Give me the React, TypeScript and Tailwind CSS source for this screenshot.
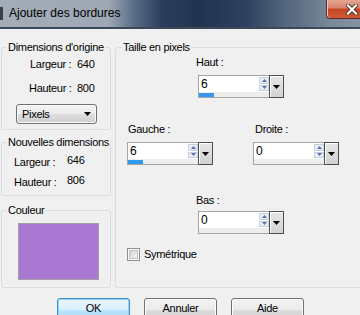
import React from "react";

const Tri = ({ up = false, color = "#000", w = 7, h = 4 }: { up?: boolean; color?: string; w?: number; h?: number }) => (
  <svg width={w} height={h} viewBox={`0 0 ${w} ${h}`}>
    {up ? (
      <polygon points={`0,${h} ${w},${h} ${w / 2},0`} fill={color} />
    ) : (
      <polygon points={`0,0 ${w},0 ${w / 2},${h}`} fill={color} />
    )}
  </svg>
);

const Spin = ({ value, bar = false }: { value: string; bar?: boolean }) => (
  <div className="flex h-[23px] w-[86px] border border-[#a5a5a5] bg-white">
    <div className="flex w-[70px] flex-col">
      <div className="flex h-[16px]">
        <div className="w-[60px] pl-[2px] text-[12px] leading-[17px]">{value}</div>
        <div className="flex w-[10px] flex-col gap-[1px] py-[1px]">
          <div className="flex h-[7px] items-center justify-center border border-[#c8d0dc] bg-[#e8edf4]">
            <Tri up color="#5b70aa" w={5} h={3} />
          </div>
          <div className="flex h-[7px] items-center justify-center border border-[#c8d0dc] bg-[#e8edf4]">
            <Tri color="#5b70aa" w={5} h={3} />
          </div>
        </div>
      </div>
      <div className="h-[5px] bg-[#ededed] pt-[1px]">
        {bar && <div className="h-[4px] w-[15px] bg-[#3399f0]" />}
      </div>
    </div>
    <div className="-my-[1px] -mr-[1px] flex h-[23px] w-[15px] items-center justify-center border border-[#4e4e4e] bg-[linear-gradient(#e6e6e6,#d2d2d2)] shadow-[inset_1px_1px_0_#fff]">
      <Tri w={7} h={4} />
    </div>
  </div>
);

const Btn = ({ label, primary = false }: { label: string; primary?: boolean }) => (
  <div
    className={
      primary
        ? "flex h-[23px] w-[73px] justify-center rounded-[3px] border border-[#3c8fc8] bg-[linear-gradient(#eaf6fd_0%,#d9f0fc_50%,#bee6fd_51%,#a9dbf6_100%)] pt-[3px] leading-[13px] shadow-[inset_0_0_0_1px_#98d4f4]"
        : "flex h-[23px] w-[73px] justify-center rounded-[3px] border border-[#707070] bg-[linear-gradient(#f2f2f2_0%,#ebebeb_50%,#dddddd_51%,#cfcfcf_100%)] pt-[3px] leading-[13px] shadow-[inset_0_0_0_1px_#fcfcfc]"
    }
  >
    {label}
  </div>
);

// group box title sits on the top border line
const Title = ({ children, ml = "ml-[5px]" }: { children: React.ReactNode; ml?: string }) => (
  <div className={`${ml} -mt-[7px] w-fit whitespace-nowrap bg-[#f0f0f0] px-[1px] leading-[13px]`}>{children}</div>
);

export default function App() {
  return (
    <div className="h-[315px] w-[360px] overflow-hidden bg-[#f0f0f0] font-['Liberation_Sans',Arial,sans-serif] text-[11px] tracking-[-0.3px] text-black">
      {/* title bar */}
      <div className="flex h-[29px] items-start border-b-2 border-[#3b4858] bg-[linear-gradient(90deg,#a3acb7_0%,#9ea8b4_30%,#5c6f88_37%,#2a3d5b_45%,#21344f_55%,#2d4160_68%,#56687f_80%,#7a889a_92%,#8592a2_100%)]">
        <div className="mt-[7px] h-[13px] w-[3px] bg-[#3a3f46]" />
        <div className="ml-[6px] self-center text-[12px] leading-[15px] tracking-normal">Ajouter des bordures</div>
        <div className="ml-auto flex h-[19px] w-[34px] items-center rounded-bl-[4px] border-b border-l border-[#5a2a22] bg-[linear-gradient(#e2a595_0%,#d7806a_45%,#c64424_50%,#cf5a35_100%)] pl-[19px] shadow-[inset_1px_0_0_#f2c6bb]">
          <svg width="12" height="11" viewBox="0 0 12 11">
            <path d="M2 1.5 L10 9.5 M10 1.5 L2 9.5" stroke="#4a2b26" strokeWidth="4" strokeLinecap="square" />
            <path d="M2 1.5 L10 9.5 M10 1.5 L2 9.5" stroke="#fff" strokeWidth="2.2" strokeLinecap="square" />
          </svg>
        </div>
      </div>

      {/* body */}
      <div className="flex flex-col pl-[1px] pt-[18px]">
        <div className="flex">
          <div className="flex w-[117px] flex-col">
            <div className="h-[83px] rounded-[3px] border border-[#d5dfe5]">
              <Title>Dimensions d'origine</Title>
              <div className="mt-[4px] grid grid-cols-[48px_auto] gap-y-[11px] pl-[27px] leading-[13px]">
                <span className="pl-[1px]">Largeur :</span>
                <span>640</span>
                <span>Hauteur :</span>
                <span>800</span>
              </div>
              <div className="ml-[14px] mt-[9px] flex h-[20px] w-[81px] items-center justify-between rounded-[3px] border border-[#707070] bg-[linear-gradient(#f2f2f2_0%,#ebebeb_50%,#dddddd_51%,#cfcfcf_100%)] pl-[5px] pr-[5px] shadow-[inset_0_0_0_1px_#fcfcfc]">
                <span>Pixels</span>
                <Tri w={7} h={4} />
              </div>
            </div>

            <div className="mt-[12px] h-[54px] rounded-[3px] border border-[#d5dfe5]">
              <Title>Nouvelles dimensions</Title>
              <div className="mt-[7px] grid grid-cols-[53px_auto] gap-y-[7px] pl-[12px] leading-[13px]">
                <span>Largeur :</span>
                <span className="-mt-[2px]">646</span>
                <span>Hauteur :</span>
                <span className="-mt-[2px]">806</span>
              </div>
            </div>

            <div className="mt-[14px] h-[78px] rounded-[3px] border border-[#d5dfe5]">
              <Title>Couleur</Title>
              <div className="ml-[16px] mt-[6px] h-[57px] w-[81px] border border-[#a0a0a0] bg-[#aa78d2]" />
            </div>
          </div>

          <div className="ml-[4px] h-[241px] w-[250px] shrink-0 rounded-[3px] border border-[#d5dfe5]">
            <Title ml="ml-[6px]">Taille en pixels</Title>
            <div className="flex flex-col pl-[11px]">
              <div className="ml-[71px] mt-[2px] flex flex-col">
                <span className="-ml-[2px] leading-[13px]">Haut :</span>
                <div className="mt-[6px]">
                  <Spin value="6" bar />
                </div>
              </div>

              <div className="mt-[25px] flex">
                <div className="flex flex-col">
                  <span className="ml-[1px] leading-[13px]">Gauche :</span>
                  <div className="mt-[6px]">
                    <Spin value="6" bar />
                  </div>
                </div>
                <div className="ml-[40px] flex flex-col">
                  <span className="ml-[2px] leading-[13px]">Droite :</span>
                  <div className="mt-[6px]">
                    <Spin value="0" />
                  </div>
                </div>
              </div>

              <div className="ml-[71px] mt-[29px] flex flex-col">
                <span className="-ml-[2px] leading-[13px]">Bas :</span>
                <div className="mt-[4px]">
                  <Spin value="0" />
                </div>
              </div>

              <div className="mt-[14px] flex items-center">
                <div className="flex h-[13px] w-[13px] items-center justify-center border border-[#8e8f8f] bg-white">
                  <div className="h-[9px] w-[9px] border border-[#c0c0c0] bg-[linear-gradient(135deg,#cfcfcf,#f7f7f7)]" />
                </div>
                <span className="ml-[4px] leading-[13px]">Symétrique</span>
              </div>
            </div>
          </div>
        </div>

        <div className="mt-[10px] flex gap-[14px] pl-[56px]">
          <Btn label="OK" primary />
          <Btn label="Annuler" />
          <Btn label="Aide" />
        </div>
      </div>
    </div>
  );
}
